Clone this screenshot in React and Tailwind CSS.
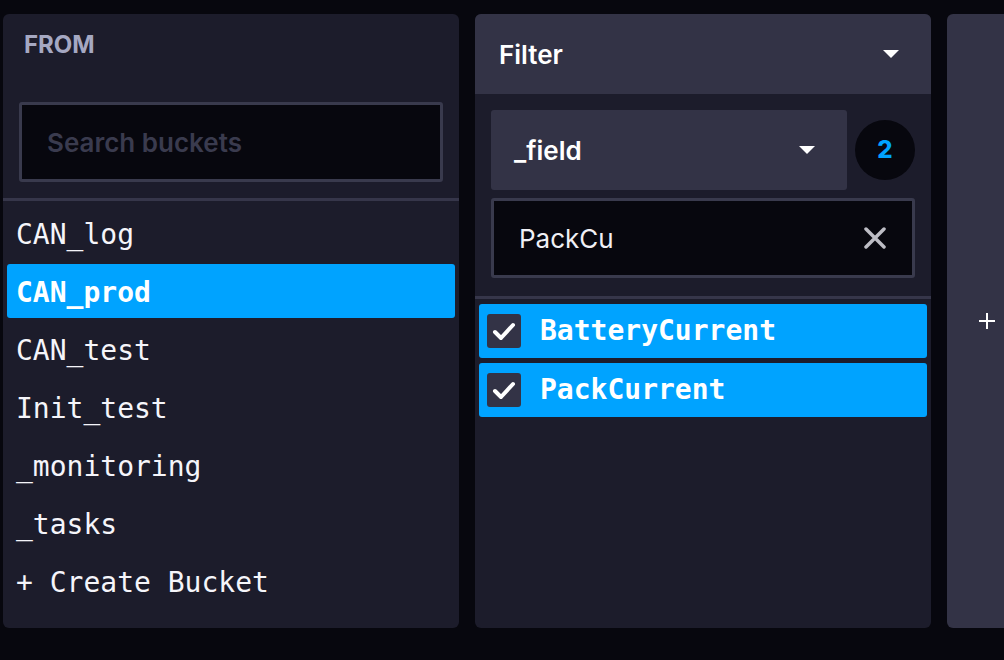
import React from "react";

const buckets = ["CAN_log", "CAN_prod", "CAN_test", "Init_test", "_monitoring", "_tasks", "+ Create Bucket"];
const fields = ["BatteryCurrent", "PackCurrent"];

function Caret() {
  return (
    <svg width="16" height="8" viewBox="0 0 16 8">
      <polygon points="0,0 16,0 8,8" fill="#ffffff" />
    </svg>
  );
}

function FromPanel() {
  return (
    <div className="w-[456px] h-[614px] shrink-0 rounded-md bg-[#1c1c2b] flex flex-col">
      <div className="px-4">
        <div className="pt-[15px] pl-[5px] text-[24px] leading-[32px] font-bold text-[#a5a8c2] font-['Inter',sans-serif]">FROM</div>
        <input
          className="mt-[41px] w-full h-[80px] rounded-[3px] border-[3px] border-[#393a4d] bg-[#07070e] pl-[25px] text-[26px] font-semibold text-white outline-none placeholder:text-[#3a3b4e] font-['Inter',sans-serif]"
          placeholder="Search buckets"
        />
      </div>
      <div className="mt-4 h-[3px] bg-[#36364a]" />
      <div className="flex flex-col gap-1 px-1 pt-[5px] font-['DejaVu_Sans_Mono',monospace] text-[28px] text-[#f5f5fa]">
        {buckets.map((b) => (
          <div
            key={b}
            className={
              "h-[54px] flex items-center pl-[9px] pt-[3px] rounded-[3px] " +
              (b === "CAN_prod" ? "bg-[#00a3ff] font-bold text-white" : "")
            }
          >
            {b}
          </div>
        ))}
      </div>
    </div>
  );
}

function FilterPanel() {
  return (
    <div className="w-[456px] h-[614px] shrink-0 rounded-md bg-[#1c1c2b] flex flex-col font-['Inter',sans-serif]">
      <div className="h-[80px] rounded-t-md bg-[#333346] flex items-center justify-between pl-6 pr-8">
        <span className="text-[26px] font-semibold text-white">Filter</span>
        <Caret />
      </div>
      <div className="px-4 pt-4 pb-[18px] flex flex-col gap-2">
        <div className="flex items-center gap-2">
          <div className="h-[80px] flex-1 rounded-[3px] bg-[#333346] flex items-center justify-between pl-[23px] pr-8">
            <span className="text-[26px] font-semibold text-white">_field</span>
            <Caret />
          </div>
          <div className="w-[60px] h-[60px] rounded-full bg-[#07070e] flex items-center justify-center text-[24px] font-extrabold text-[#00a3ff]">
            2
          </div>
        </div>
        <div className="h-[80px] rounded-[3px] border-[3px] border-[#393a4d] bg-[#07070e] flex items-center justify-between pl-[25px] pr-[26px]">
          <span className="text-[26px] text-[#f0f0f5]">PackCu</span>
          <svg width="22" height="22" viewBox="0 0 22 22">
            <path d="M2 2 L20 20 M20 2 L2 20" stroke="#bdbdc5" strokeWidth="3.5" strokeLinecap="round" />
          </svg>
        </div>
      </div>
      <div className="h-[3px] bg-[#36364a]" />
      <div className="flex flex-col gap-[5px] px-1 pt-[5px]">
        {fields.map((f) => (
          <div key={f} className="h-[54px] rounded-[3px] bg-[#00a3ff] flex items-center pl-2 gap-[19px]">
            <div className="w-[34px] h-[34px] rounded-[3px] bg-[#333346] flex items-center justify-center">
              <svg width="34" height="34" viewBox="0 0 34 34">
                <polyline points="8,18 14,24 26,11" fill="none" stroke="#ffffff" strokeWidth="4" strokeLinecap="round" strokeLinejoin="round" />
              </svg>
            </div>
            <span className="font-['DejaVu_Sans_Mono',monospace] text-[28px] font-bold text-white">{f}</span>
          </div>
        ))}
      </div>
    </div>
  );
}

export default function App() {
  return (
    <div className="w-[1004px] h-[660px] overflow-hidden bg-[#07070e] flex gap-4 pt-[14px] pl-[3px]">
      <FromPanel />
      <FilterPanel />
      <div className="w-[80px] h-[614px] shrink-0 rounded-md bg-[#333346] flex items-center justify-center">
        <svg width="16" height="16" viewBox="0 0 16 16">
          <path d="M8 0 V16 M0 8 H16" stroke="#ffffff" strokeWidth="2" />
        </svg>
      </div>
    </div>
  );
}
